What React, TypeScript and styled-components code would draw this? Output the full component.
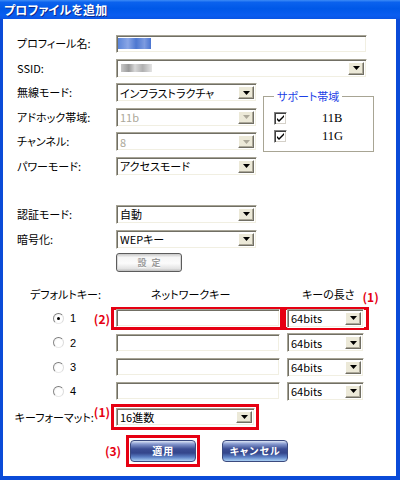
import React from "react";
import styled, { createGlobalStyle, css } from "styled-components";

const Global = createGlobalStyle`
  html, body { margin: 0; padding: 0; background: #fff; }
  body {
    width: 400px; height: 480px; overflow: hidden;
    font-family: "Noto Sans CJK JP", "Noto Sans", sans-serif;
  }
`;

const RED = "#e60012";

const Window = styled.div`
  width: 400px;
  height: 480px;
  display: flex;
  flex-direction: column;
  background: #0a4bd8;
`;

const TitleBar = styled.div`
  height: 19px;
  flex: none;
  display: flex;
  align-items: center;
  padding-left: 4px;
  background: linear-gradient(
    to bottom,
    #3d8cf6 0%,
    #0b62ee 12%,
    #0058e8 45%,
    #0a5df0 80%,
    #0a55e4 100%
  );
`;

const Title = styled.span`
  color: #fff;
  font-size: 12px;
  font-weight: bold;
  font-feature-settings: "palt";
  letter-spacing: 0.2px;
  text-shadow: 1px 1px 0 #0c2a8c;
`;

const Frame = styled.div`
  flex: 1;
  display: flex;
  padding: 0 4px 4px 3px;
`;

const Content = styled.div`
  flex: 1;
  background: #fff;
  padding: 15px 0 0 14px;
  display: flex;
  flex-direction: column;
  font-size: 11px;
  color: #000;
`;

const FormGrid = styled.div<{ $gap: number; $top?: number }>`
  display: grid;
  grid-template-columns: 99px 141px 6px 111px;
  grid-auto-rows: 19px;
  row-gap: ${(p) => p.$gap}px;
  margin-top: ${(p) => p.$top ?? 0}px;
  align-items: center;
`;

const Label = styled.div`
  grid-column: 1;
  font-size: 11px;
  font-feature-settings: "palt";
  white-space: nowrap;
  line-height: 19px;
`;

const Field = styled.div<{ $wide?: boolean }>`
  grid-column: ${(p) => (p.$wide ? "2 / span 3" : "2")};
  display: flex;
`;

const sunken = css`
  box-sizing: border-box;
  border: 1px solid;
  border-color: #a7a496 #fff #fff #a7a496;
  box-shadow: inset 1px 1px 0 #716f64, inset -1px -1px 0 #f1efe2;
  background: #fff;
`;

const SelectFrame = styled.div<{ $w: number; $h?: number }>`
  ${sunken};
  width: ${(p) => p.$w}px;
  height: ${(p) => p.$h ?? 19}px;
  display: flex;
  align-items: stretch;
  padding: 2px;
`;

const SelectValue = styled.span<{ $disabled?: boolean }>`
  flex: 1;
  display: flex;
  align-items: center;
  padding-left: 1px;
  font-size: 11px;
  line-height: 12px;
  font-feature-settings: "palt";
  white-space: nowrap;
  color: ${(p) => (p.$disabled ? "#aca899" : "#000")};
`;

const DropButton = styled.span`
  width: 16px;
  flex: none;
  box-sizing: border-box;
  display: flex;
  align-items: center;
  justify-content: center;
  background: #ece9d8;
  border: 1px solid;
  border-color: #fff #716f64 #716f64 #fff;
  box-shadow: inset -1px -1px 0 #aca899;
`;

const TextFrame = styled.div<{ $w: number; $h?: number }>`
  ${sunken};
  width: ${(p) => p.$w}px;
  height: ${(p) => p.$h ?? 18}px;
  display: flex;
  align-items: center;
  padding: 0 0 0 1px;
`;

const Selection = styled.span`
  width: 33px;
  height: 11px;
  background: linear-gradient(90deg, #5a84d8, #8aa6e6 30%, #4d77d0 55%, #7d9be0 80%, #4a74d0);
  filter: blur(0.4px);
`;

const Mosaic = styled.span`
  width: 31px;
  height: 8px;
  margin-left: 1px;
  background: linear-gradient(90deg, #c8c8c8, #9a9a9a 25%, #d8d8d8 45%, #b0b0b0 70%, #e4e4e4);
  filter: blur(0.5px);
`;

const Arrow = ({ disabled }: { disabled?: boolean }) => (
  <svg width="7" height="4" viewBox="0 0 7 4">
    <polygon points="0,0 7,0 3.5,4" fill={disabled ? "#aca899" : "#000"} />
  </svg>
);

const Select = ({
  w,
  h,
  value,
  disabled,
  children,
}: {
  w: number;
  h?: number;
  value?: string;
  disabled?: boolean;
  children?: React.ReactNode;
}) => (
  <SelectFrame $w={w} $h={h}>
    <SelectValue $disabled={disabled}>{children ?? value}</SelectValue>
    <DropButton>
      <Arrow disabled={disabled} />
    </DropButton>
  </SelectFrame>
);

/* group box */
const GroupBox = styled.div`
  grid-column: 4;
  grid-row: 3 / span 4;
  align-self: start;
  margin-top: 12.8px;
  height: 56px;
  box-sizing: border-box;
  position: relative;
  border: 1px solid #a8a594;
  box-shadow: inset 1px 1px 0 #fff, 1px 1px 0 #fff;
  padding: 15px 0 0 10px;
  display: flex;
  flex-direction: column;
  gap: 5px;
`;

const GroupTitle = styled.span`
  position: absolute;
  top: -8px;
  left: 10px;
  padding: 0 3px;
  background: #fff;
  color: #1d3fe6;
  font-size: 11px;
  font-feature-settings: "palt";
  line-height: 14px;
`;

const CheckRow = styled.div`
  display: flex;
  align-items: center;
  height: 13px;
`;

const CheckBox = styled.span`
  width: 13px;
  height: 13px;
  box-sizing: border-box;
  border: 1px solid;
  border-color: #808080 #fff #fff #808080;
  box-shadow: inset 1px 1px 0 #404040, inset -1px -1px 0 #d4d0c8;
  background: #fff;
  display: flex;
  align-items: center;
  justify-content: center;
`;

const BandText = styled.span`
  margin-left: 35px;
  font-family: "Liberation Serif", "DejaVu Serif", serif;
  font-size: 12.5px;
  line-height: 13px;
`;

const Check = () => (
  <svg width="7" height="7" viewBox="0 0 7 7">
    <path d="M0 3 L2 5 L7 0 L7 2 L2 7 L0 5 Z" fill="#000" />
  </svg>
);

/* setting button */
const SettingButton = styled.button`
  margin: 4px 0 0 99px;
  width: 66px;
  height: 19px;
  padding: 0;
  box-sizing: border-box;
  border: 1px solid #5c5c5c;
  border-radius: 3px;
  background: linear-gradient(to bottom, #c8c8c8 0%, #f6f6f6 20%, #fbfbfb 55%, #e4e4e4 85%, #bdbdbd 100%);
  box-shadow: inset 1px 0 0 #d8d8d8, inset -1px 0 0 #d8d8d8;
  color: #9a9a9a;
  font-family: "Noto Sans CJK JP", sans-serif;
  font-size: 9px;
  font-weight: bold;
  letter-spacing: 5px;
  text-indent: 5px;
  text-shadow: 0 1px 0 #fff;
`;

/* key table */
const KeyHeader = styled.div`
  margin-top: 14px;
  height: 16px;
  display: grid;
  grid-template-columns: 94px 172px 86px;
  align-items: center;
  font-size: 11px;
  font-feature-settings: "palt";
  white-space: nowrap;
`;

const HeadCell = styled.div<{ $pad: number }>`
  padding-left: ${(p) => p.$pad}px;
  display: flex;
  align-items: center;
`;

const KeyRows = styled.div`
  margin-top: 5px;
  display: grid;
  grid-template-columns: 94px 172px 86px;
  grid-auto-rows: 23px;
  row-gap: 1.3px;
`;

const Mark = styled.div<{ $on?: boolean; $pad?: string }>`
  box-sizing: border-box;
  border: 3px solid ${(p) => (p.$on ? RED : "transparent")};
  padding: ${(p) => p.$pad ?? "0 2px"};
  display: flex;
  align-items: center;
`;

const Note = styled.span`
  color: ${RED};
  font-family: "Noto Sans CJK JP", sans-serif;
  font-size: 12px;
  font-weight: bold;
  line-height: 13px;
  white-space: nowrap;
`;

const HeadNote = styled(Note)`
  margin: 4px 0 0 8px;
`;

const RadioCell = styled.div`
  display: flex;
  align-items: center;
  padding: 0 1px 0 36px;
`;

const Radio = styled.span<{ $checked?: boolean }>`
  width: 11px;
  height: 11px;
  box-sizing: border-box;
  border-radius: 50%;
  border: 1px solid;
  border-color: #7a7a7a #dcdcdc #e8e8e8 #8a8a8a;
  background: radial-gradient(circle at 60% 60%, #fff 45%, #ececec 100%);
  display: flex;
  align-items: center;
  justify-content: center;
  &::after {
    content: "";
    width: 3px;
    height: 3px;
    border-radius: 50%;
    background: ${(p) => (p.$checked ? "#000" : "transparent")};
  }
`;

const RadioNum = styled.span`
  margin-left: 6px;
  font-family: "Liberation Sans", sans-serif;
  font-size: 11px;
`;

const Spacer = styled.span`
  flex: 1;
`;

const FormatRow = styled.div`
  margin-top: 1px;
  display: grid;
  grid-template-columns: 94px 148px;
  height: 26px;
`;

const FormatLabel = styled.div`
  display: flex;
  justify-content: flex-end;
  align-items: center;
  padding-right: 1px;
  font-size: 11px;
  font-feature-settings: "palt";
  white-space: nowrap;
`;

const FormatNote = styled(Note)`
  align-self: flex-start;
  margin: 1px 0 0 0;
`;

const ButtonRow = styled.div`
  margin-top: 5px;
  display: flex;
  align-items: center;
  padding-left: 88px;
`;

const ButtonMark = styled(Mark)`
  margin-left: 5px;
`;

const BlueButton = styled.button`
  width: 66px;
  height: 22px;
  padding: 0;
  box-sizing: border-box;
  border: 1px solid #3b4a7e;
  border-radius: 4px;
  background: linear-gradient(
    to bottom,
    #dfe7f7 0%,
    #8699cf 15%,
    #3b4d93 40%,
    #34468c 60%,
    #5b7fc4 80%,
    #a9d0f5 100%
  );
  color: #fff;
  font-family: "Noto Sans CJK JP", sans-serif;
  font-size: 10px;
  font-weight: bold;
  letter-spacing: 1px;
  font-feature-settings: "palt";
`;

const CancelButton = styled(BlueButton)`
  margin-left: 22px;
`;

const keyRows = [1, 2, 3, 4];

export default function App() {
  return (
    <>
      <Global />
      <Window>
        <TitleBar>
          <Title>プロファイルを追加</Title>
        </TitleBar>
        <Frame>
          <Content>
            <FormGrid $gap={5.6}>
              <Label>プロフィール名:</Label>
              <Field $wide>
                <TextFrame $w={251} $h={18}>
                  <Selection />
                </TextFrame>
              </Field>
              <Label>SSID:</Label>
              <Field $wide>
                <Select w={251}>
                  <Mosaic />
                </Select>
              </Field>
              <Label>無線モード:</Label>
              <Field>
                <Select w={141} value="インフラストラクチャ" />
              </Field>
              <Label>アドホック帯域:</Label>
              <Field>
                <Select w={141} value="11b" disabled />
              </Field>
              <Label>チャンネル:</Label>
              <Field>
                <Select w={141} value="8" disabled />
              </Field>
              <Label>パワーモード:</Label>
              <Field>
                <Select w={141} value="アクセスモード" />
              </Field>
              <GroupBox>
                <GroupTitle>サポート帯域</GroupTitle>
                <CheckRow>
                  <CheckBox>
                    <Check />
                  </CheckBox>
                  <BandText>11B</BandText>
                </CheckRow>
                <CheckRow>
                  <CheckBox>
                    <Check />
                  </CheckBox>
                  <BandText>11G</BandText>
                </CheckRow>
              </GroupBox>
            </FormGrid>

            <FormGrid $gap={6} $top={29}>
              <Label>認証モード:</Label>
              <Field>
                <Select w={141} value="自動" />
              </Field>
              <Label>暗号化:</Label>
              <Field>
                <Select w={141} value="WEPキー" />
              </Field>
            </FormGrid>

            <SettingButton>設定</SettingButton>

            <KeyHeader>
              <HeadCell $pad={13}>デフォルトキー:</HeadCell>
              <HeadCell $pad={40}>ネットワークキー</HeadCell>
              <HeadCell $pad={19}>
                キーの長さ
                <HeadNote>(1)</HeadNote>
              </HeadCell>
            </KeyHeader>

            <KeyRows>
              {keyRows.map((n) => (
                <React.Fragment key={n}>
                  <RadioCell>
                    <Radio $checked={n === 1} />
                    <RadioNum>{n}</RadioNum>
                    <Spacer />
                    {n === 1 && <Note>(2)</Note>}
                  </RadioCell>
                  <Mark $on={n === 1} $pad="0 0 0 2px">
                    <TextFrame $w={165} $h={18} />
                  </Mark>
                  <Mark $on={n === 1} $pad="0 2px 0 1px">
                    <Select w={77} value="64bits" />
                  </Mark>
                </React.Fragment>
              ))}
            </KeyRows>

            <FormatRow>
              <FormatLabel>
                キーフォーマット:
                <FormatNote>(1)</FormatNote>
              </FormatLabel>
              <Mark $on $pad="1px 1px 1px 2px">
                <Select w={139} h={18} value="16進数" />
              </Mark>
            </FormatRow>

            <ButtonRow>
              <Note>(3)</Note>
              <ButtonMark $on $pad="2px 1px">
                <BlueButton>適用</BlueButton>
              </ButtonMark>
              <CancelButton>キャンセル</CancelButton>
            </ButtonRow>
          </Content>
        </Frame>
      </Window>
    </>
  );
}
